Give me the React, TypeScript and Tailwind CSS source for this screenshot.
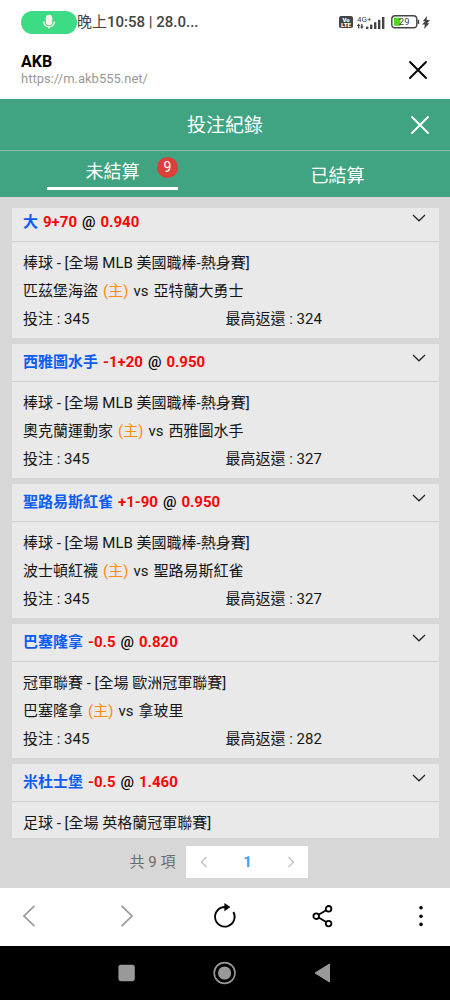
type Bet = {
	pick: string;
	line: string;
	odds: string;
	league: string;
	home?: string;
	away?: string;
	stake?: number;
	payout?: number;
};

const bets: Bet[] = [
	{
		pick: "大",
		line: "9+70",
		odds: "0.940",
		league: "棒球 - [全場 MLB 美國職棒-熱身賽]",
		home: "匹茲堡海盜",
		away: "亞特蘭大勇士",
		stake: 345,
		payout: 324,
	},
	{
		pick: "西雅圖水手",
		line: "-1+20",
		odds: "0.950",
		league: "棒球 - [全場 MLB 美國職棒-熱身賽]",
		home: "奧克蘭運動家",
		away: "西雅圖水手",
		stake: 345,
		payout: 327,
	},
	{
		pick: "聖路易斯紅雀",
		line: "+1-90",
		odds: "0.950",
		league: "棒球 - [全場 MLB 美國職棒-熱身賽]",
		home: "波士頓紅襪",
		away: "聖路易斯紅雀",
		stake: 345,
		payout: 327,
	},
	{
		pick: "巴塞隆拿",
		line: "-0.5",
		odds: "0.820",
		league: "冠軍聯賽 - [全場 歐洲冠軍聯賽]",
		home: "巴塞隆拿",
		away: "拿玻里",
		stake: 345,
		payout: 282,
	},
	{
		pick: "米杜士堡",
		line: "-0.5",
		odds: "1.460",
		league: "足球 - [全場 英格蘭冠軍聯賽]",
	},
];

const CloseIcon = () => (
	<svg width="20" height="20" viewBox="0 0 20 20" fill="none" stroke="currentColor" strokeWidth="1.9" strokeLinecap="round">
		<path d="M2 2l16 16M18 2L2 18" />
	</svg>
);

const StatusBar = () => (
	<div className="flex h-11 shrink-0 items-center pl-[21px] pr-5 text-[#444]">
		<div className="flex h-[23px] w-14 items-center justify-center rounded-full bg-[#3ddc84] text-[#fff0ea]">
			<svg width="14" height="16" viewBox="0 0 14 16">
				<rect x="3.8" y="0.8" width="6.4" height="10.4" rx="3.2" fill="currentColor" />
				<path d="M1.6 7.5a5.4 5.4 0 0 0 10.8 0" fill="none" stroke="currentColor" strokeWidth="1.4" />
				<path d="M7 12.5v2" stroke="currentColor" strokeWidth="1.6" />
			</svg>
		</div>
		<span className="text-[15px] font-medium">
			<span className="font-normal">晚上</span>10:58 | 28.0...
		</span>
		<div className="ml-auto flex items-center">
			<div className="flex h-3 w-[14px] flex-col items-center justify-center rounded-[2px] bg-[#444] text-[6px] leading-[5px] font-black text-white">
				<span>Vo</span>
				<span>LTE</span>
			</div>
			<svg className="ml-1" width="28" height="15" viewBox="0 0 28 15" fill="currentColor">
				<text x="0" y="6.6" fontSize="8">4G+</text>
				<path d="M1.6 8.6l1.8 2.4H2.3v2.6H1V11H-.2zM4.8 14L3 11.6h1.2V9h1.3v2.6h1.2z" />
				<rect x="9" y="11.6" width="2.4" height="2.4" />
				<rect x="13" y="9.6" width="2.4" height="4.4" />
				<rect x="17" y="7.2" width="2.4" height="6.8" />
				<rect x="21" y="4.8" width="2.4" height="9.2" />
				<rect x="25" y="2" width="2.4" height="12" />
			</svg>
			<svg className="ml-[6px]" width="29" height="14" viewBox="0 0 29 14">
				<rect x="3" y="2.8" width="6.5" height="8" fill="#56d31f" />
				<rect x="0.8" y="0.8" width="25" height="12" rx="3.4" fill="none" stroke="#444" strokeWidth="1.4" />
				<path d="M27.4 4.8v4.2" stroke="#444" strokeWidth="1.6" />
				<text x="13.2" y="10.4" textAnchor="middle" fontSize="9.5" fill="#444">29</text>
			</svg>
			<svg className="ml-[2px]" width="8" height="13" viewBox="0 0 8 13" fill="currentColor">
				<path d="M5 0L.8 5.2h2.4L0 8.4h2.8L2.2 13 7.4 7.2H5.2L8 4H4.6z" />
			</svg>
		</div>
	</div>
);

const BetCard = ({ bet }: { bet: Bet }) => (
	<article className="mb-[6px] bg-[#e9e9e9]">
		<header className="flex h-[38px] justify-between border-b border-[#d0d0d0] pl-[11px] pr-[13px]">
			<h2 className="flex items-center gap-[5px] font-bold text-[#f80606]">
				<span className="text-[#0c5cf2]">{bet.pick}</span>
				<span>{bet.line}</span>
				<span className="font-medium text-black">@</span>
				<span>{bet.odds}</span>
			</h2>
			<button aria-label="收合" className="mt-[10px] h-2 text-[#222]">
				<svg width="14" height="8" viewBox="0 0 14 8" fill="none" stroke="currentColor" strokeWidth="1.2">
					<path d="M1 1l6 5.8L13 1" />
				</svg>
			</button>
		</header>
		<div className="px-[11px] pt-[7px] pb-[5px] leading-7">
			<p>{bet.league}</p>
			{bet.home && (
				<p className="flex gap-[5px]">
					<span>{bet.home}</span>
					<span className="text-[#ff8c0a]">(主)</span>
					<span>vs</span>
					<span>{bet.away}</span>
				</p>
			)}
			{bet.stake && (
				<div className="grid grid-cols-2">
					<span>投注 : {bet.stake}</span>
					<span>最高返還 : {bet.payout}</span>
				</div>
			)}
		</div>
	</article>
);

const App = () => {
	return (
		<div className="flex h-screen flex-col bg-white font-[Roboto,'Noto_Sans_CJK_TC',sans-serif] text-[15px] text-[#161616]">
			<StatusBar />

			{/* BROWSER HEADER */}
			<div className="flex h-[55px] shrink-0 items-center justify-between pb-1 pl-[21px] pr-[22px]">
				<div>
					<h1 className="text-base leading-[18px] font-bold text-black">AKB</h1>
					<p className="text-[13px] leading-4 text-[#999]">https://m.akb555.net/</p>
				</div>
				<button aria-label="關閉" className="text-black">
					<CloseIcon />
				</button>
			</div>

			{/* TITLE AND TABS */}
			<div className="grid h-[52px] shrink-0 grid-cols-[48px_1fr_48px] items-center border-b border-[#8fbfab] bg-[#40a381] text-white">
				<h2 className="col-start-2 pt-1 text-center text-[19px]">投注紀錄</h2>
				<button aria-label="關閉紀錄" className="pl-2">
					<CloseIcon />
				</button>
			</div>
			<nav className="grid h-[46px] shrink-0 grid-cols-2 bg-[#40a381] text-lg text-white">
				<div className="flex justify-center">
					<button className="relative h-[39px] w-[131px] border-b-[3px] border-white pt-[6px]">
						未結算
						<span className="absolute top-[6px] right-0 size-[21px] rounded-full bg-[#dc4038] text-center text-sm leading-[21px]">
							9
						</span>
					</button>
				</div>
				<button className="pt-1">已結算</button>
			</nav>

			<main className="flex min-h-0 flex-1 flex-col bg-[#d7d7d7] pt-[11px]">
				<div className="mr-[11px] ml-3 min-h-0 flex-1 overflow-hidden">
					<div className="-mt-1">
						{bets.map((bet) => (
							<BetCard key={bet.pick} bet={bet} />
						))}
					</div>
				</div>
				<div className="flex h-[50px] shrink-0 items-center justify-center gap-[11px] pr-3 pb-[2px] text-[#6b6c70]">
					<span>共 9 項</span>
					<div className="grid h-8 w-[122px] grid-cols-[35px_1fr_35px] items-center bg-white">
						<button aria-label="上一頁" className="flex justify-center text-[#c0c4cc]">
							<svg width="8" height="12" viewBox="0 0 8 12" fill="none" stroke="currentColor" strokeWidth="1.5">
								<path d="M6.5 1L1.5 6l5 5" />
							</svg>
						</button>
						<button className="font-bold text-[#409eff]">1</button>
						<button aria-label="下一頁" className="flex justify-center text-[#c0c4cc]">
							<svg width="8" height="12" viewBox="0 0 8 12" fill="none" stroke="currentColor" strokeWidth="1.5">
								<path d="M1.5 1l5 5-5 5" />
							</svg>
						</button>
					</div>
				</div>
			</main>

			{/* BROWSER TOOLBAR */}
			<div className="flex h-[58px] shrink-0 items-center justify-between px-[17px] pb-[2px] text-black">
				<button aria-label="返回" className="text-[#999]">
					<svg width="24" height="24" viewBox="0 0 24 24" fill="none" stroke="currentColor" strokeWidth="1.7">
						<path d="M17.4 1.8L7 12l10.4 10.2" />
					</svg>
				</button>
				<button aria-label="前進" className="text-[#999]">
					<svg width="24" height="24" viewBox="0 0 24 24" fill="none" stroke="currentColor" strokeWidth="1.7">
						<path d="M6.6 1.8L17 12 6.6 22.2" />
					</svg>
				</button>
				<button aria-label="重新整理">
					<svg className="overflow-visible" width="24" height="24" viewBox="0 0 24 24" fill="none" stroke="currentColor" strokeWidth="1.8">
						<path d="M12 3A9.8 9.8 0 1 0 20.4 8" />
						<path d="M11.4 -1L17.4 3l-6 4.2z" fill="currentColor" stroke="none" />
					</svg>
				</button>
				<button aria-label="分享">
					<svg width="24" height="24" viewBox="0 0 24 24" fill="none" stroke="currentColor" strokeWidth="1.8">
						<circle cx="5.2" cy="12.2" r="2.8" />
						<circle cx="17.6" cy="4.8" r="2.8" />
						<circle cx="17.6" cy="19.6" r="2.8" />
						<path d="M7.6 10.8l7.6-4.5M7.6 13.6l7.6 4.5" />
					</svg>
				</button>
				<button aria-label="更多">
					<svg width="24" height="24" viewBox="0 0 24 24" fill="currentColor">
						<circle cx="12" cy="3.8" r="1.8" />
						<circle cx="12" cy="12.2" r="1.8" />
						<circle cx="12" cy="20.4" r="1.8" />
					</svg>
				</button>
			</div>

			{/* SYSTEM NAVIGATION */}
			<div className="flex h-[54px] shrink-0 items-center justify-center gap-[74px] bg-black text-[#999]">
				<button aria-label="最近">
					<svg width="24" height="24" viewBox="0 0 24 24" fill="currentColor">
						<rect x="3.4" y="3.8" width="16.4" height="16.4" rx="2.4" />
					</svg>
				</button>
				<button aria-label="主畫面">
					<svg width="24" height="24" viewBox="0 0 24 24">
						<circle cx="11.6" cy="12" r="10.4" fill="none" stroke="currentColor" strokeWidth="1.6" />
						<circle cx="11.6" cy="12" r="6.6" fill="currentColor" />
					</svg>
				</button>
				<button aria-label="上一步">
					<svg width="24" height="24" viewBox="0 0 24 24" fill="currentColor">
						<path d="M18.5 3v18L4 12z" strokeWidth="1" stroke="currentColor" strokeLinejoin="round" />
					</svg>
				</button>
			</div>
		</div>
	);
};

export default App;
